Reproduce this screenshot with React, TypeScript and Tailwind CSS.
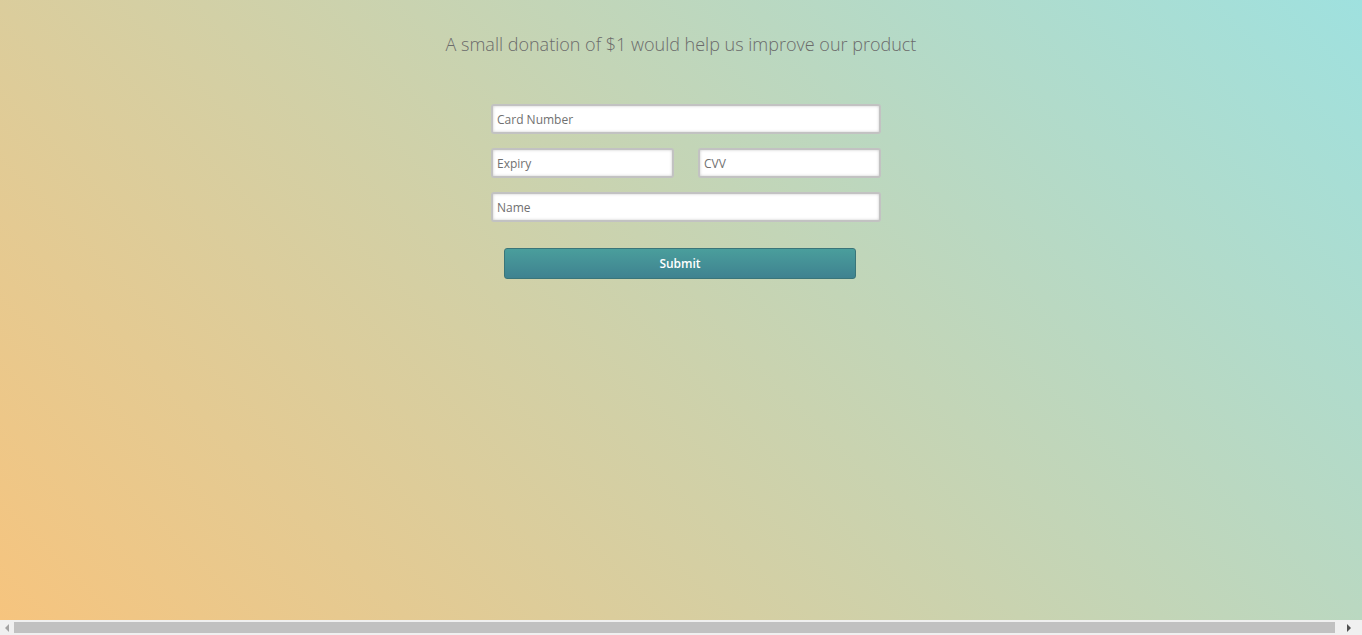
const field =
  "h-[30px] rounded-[3px] border-2 border-[#c2c2c2] bg-white px-[4px] text-[12px] text-[#555] placeholder:text-[#707070] shadow-[inset_0_0_3px_rgba(0,0,0,0.22)] outline-none"

export default function App() {
  return (
    <div className="w-[1362px] h-[635px] flex flex-col overflow-hidden" style={{ fontFamily: '"Open Sans", sans-serif' }}>
      <div className="flex-1 flex flex-col items-center bg-[linear-gradient(45deg,#f6c47e,#9fe1df)]">
        <h1 className="mt-[31px] text-[18px] font-light leading-[26px] text-[#6b6b6b]">
          A small donation of $1 would help us improve our product
        </h1>

        <form className="mt-[47px] w-[400px] pl-[10px] flex flex-col gap-[14px]">
          <input placeholder="Card Number" className={field + " w-full"} />
          <div className="flex justify-between">
            <input placeholder="Expiry" className={field + " w-[183px]"} />
            <input placeholder="CVV" className={field + " w-[183px]"} />
          </div>
          <input placeholder="Name" className={field + " w-full"} />
        </form>

        <button
          type="button"
          className="mt-[26px] mr-[2px] h-[31px] w-[352px] rounded-[3px] border border-[#3a7579] bg-[linear-gradient(to_bottom,#4a9e9c,#3f8290)] text-[12px] font-semibold text-white"
        >
          Submit
        </button>
      </div>

      {/* horizontal scrollbar */}
      <div className="h-[15px] flex items-stretch bg-[#f0f0f0]">
        <div className="w-[14px] flex items-center justify-center">
          <div className="w-0 h-0 border-y-[4px] border-y-transparent border-r-[4px] border-r-[#a3a3a3]" />
        </div>
        <div className="flex-1 my-[2px] bg-[#c1c1c1]" />
        <div className="w-[27px] flex items-center justify-center">
          <div className="w-0 h-0 border-y-[4px] border-y-transparent border-l-[4px] border-l-[#505050]" />
        </div>
      </div>
    </div>
  )
}
